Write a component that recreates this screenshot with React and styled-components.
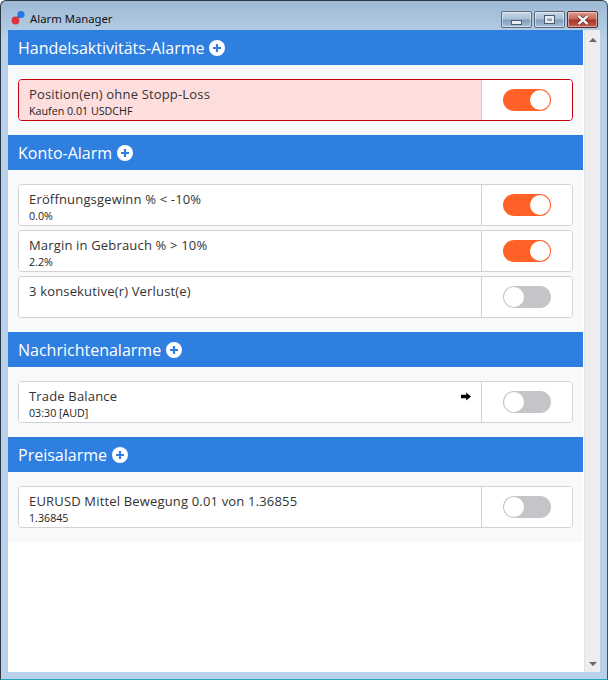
import styled, { createGlobalStyle } from 'styled-components'

const Global = createGlobalStyle`
  html, body { margin: 0; padding: 0; height: 100%; }
  body { font-family: "Open Sans", "Liberation Sans", sans-serif; background: #fff; }
`

function Toggle({ on }) {
  return (
    <ToggleTrack on={on ? 1 : 0}>
      <ToggleKnob on={on ? 1 : 0} />
    </ToggleTrack>
  )
}

function AlarmCard({ title, sub, on, alert, arrow }) {
  return (
    <Card alert={alert ? 1 : 0}>
      <CardText alert={alert ? 1 : 0}>
        <CardTitle>{title}</CardTitle>
        <CardSub>{sub}</CardSub>
        {arrow && (
          <ArrowIcon viewBox="0 0 10 9">
            <path d="M0 2.8h5.2V0.4L10 4.5 5.2 8.6V6.2H0z" fill="#000" />
          </ArrowIcon>
        )}
      </CardText>
      <CardSwitch>
        <Toggle on={on} />
      </CardSwitch>
    </Card>
  )
}

function Section({ title, children }) {
  return (
    <>
      <SectionHeader>
        <span>{title}</span>
        <PlusIcon viewBox="0 0 16 16">
          <circle cx="8" cy="8" r="8" fill="#fff" />
          <path d="M8 4v8M4 8h8" stroke="#2e7fe0" strokeWidth="2.2" />
        </PlusIcon>
      </SectionHeader>
      <SectionBody>{children}</SectionBody>
    </>
  )
}

export default function App() {
  return (
    <Window>
      <Global />
      <TitleBar>
        <AppLogo viewBox="0 0 16 16">
          <path d="M6 6.5l2.5-1.5 1 2-2 1.5z" fill="#3b5a9a" />
          <circle cx="10" cy="4.5" r="3.6" fill="#2277e6" />
          <circle cx="4.5" cy="10.5" r="3.9" fill="#d9333f" />
        </AppLogo>
        <TitleText>Alarm Manager</TitleText>
        <WindowButtons>
          <WinButton>
            <MinGlyph />
          </WinButton>
          <WinButton>
            <MaxGlyph />
          </WinButton>
          <CloseButton>
            <CloseGlyph viewBox="0 0 12 10">
              <path d="M1.5 1l9 8M10.5 1l-9 8" stroke="#5a2a28" strokeWidth="4" />
              <path d="M1.5 1l9 8M10.5 1l-9 8" stroke="#f4f1f0" strokeWidth="2.4" />
            </CloseGlyph>
          </CloseButton>
        </WindowButtons>
      </TitleBar>
      <ClientArea>
        <Content>
          <Sections>
            <Section title="Handelsaktivitäts-Alarme">
              <AlarmCard alert on title="Position(en) ohne Stopp-Loss" sub="Kaufen 0.01 USDCHF" />
            </Section>
            <Section title="Konto-Alarm">
              <AlarmCard on title="Eröffnungsgewinn % < -10%" sub="0.0%" />
              <AlarmCard on title="Margin in Gebrauch % > 10%" sub="2.2%" />
              <AlarmCard title="3 konsekutive(r) Verlust(e)" sub="" />
            </Section>
            <Section title="Nachrichtenalarme">
              <AlarmCard arrow title="Trade Balance" sub="03:30 [AUD]" />
            </Section>
            <Section title="Preisalarme">
              <AlarmCard title="EURUSD Mittel Bewegung 0.01 von 1.36855" sub="1.36845" />
            </Section>
          </Sections>
        </Content>
        <Scrollbar>
          <ScrollArrow />
          <ScrollArrow down />
        </Scrollbar>
      </ClientArea>
    </Window>
  )
}

const Window = styled.div`
  width: 608px;
  height: 680px;
  box-sizing: border-box;
  display: flex;
  flex-direction: column;
  border: 1px solid #2b3a44;
  border-bottom-color: #1fa7b5;
  border-right-color: #1c5f6b;
  border-radius: 6px 6px 0 0;
  background: linear-gradient(180deg, #9fb9d4 0, #b9d1ea 40px, #b9d1ea 100%);
  overflow: hidden;
`

const TitleBar = styled.div`
  height: 29px;
  flex: none;
  box-sizing: border-box;
  display: flex;
  align-items: center;
  padding: 5px 9px 0 10px;
`

const AppLogo = styled.svg`
  width: 16px;
  height: 16px;
`

const TitleText = styled.div`
  margin-left: 3px;
  font-family: "Noto Sans", "Open Sans", sans-serif;
  font-size: 11.3px;
  color: #111;
`

const WindowButtons = styled.div`
  margin-left: auto;
  display: flex;
  gap: 2px;
  align-self: flex-start;
  margin-top: 5px;
`

const WinButton = styled.div`
  width: 31px;
  height: 17px;
  box-sizing: border-box;
  border: 1px solid #5a6b80;
  border-radius: 2px;
  display: flex;
  align-items: center;
  justify-content: center;
  background: linear-gradient(180deg, #c8d8e8 0, #aac0d6 45%, #7f9cba 55%, #a9c2da 100%);
  box-shadow: inset 0 0 0 1px rgba(255, 255, 255, 0.45);
`

const CloseButton = styled(WinButton)`
  border-color: #5c2a2a;
  background: linear-gradient(180deg, #dc9a8e 0, #c9695c 45%, #a8352a 55%, #c2604f 100%);
`

const MinGlyph = styled.div`
  width: 9px;
  height: 3px;
  margin-top: 5px;
  background: #e9eef3;
  border: 1px solid #4d5c6c;
`

const MaxGlyph = styled.div`
  width: 5px;
  height: 3px;
  border: 2px solid #e9eef3;
  outline: 1px solid #4d5c6c;
`

const CloseGlyph = styled.svg`
  width: 12px;
  height: 10px;
`

const ClientArea = styled.div`
  flex: 1;
  display: flex;
  margin: 0 7px 7px 7px;
  background: #fff;
  min-height: 0;
`

const Content = styled.div`
  flex: 1;
  min-width: 0;
  background: #fff;
`

const Sections = styled.div`
  background: #f8f9fb;
`

const SectionHeader = styled.div`
  height: 35px;
  box-sizing: border-box;
  padding: 0 10px;
  background: #2e7fe0;
  color: #fff;
  display: flex;
  align-items: center;
  gap: 5px;
  font-size: 16px;
`

const PlusIcon = styled.svg`
  width: 16px;
  height: 16px;
  margin-top: 1px;
`

const SectionBody = styled.div`
  padding: 14px 10px;
  display: flex;
  flex-direction: column;
  gap: 4px;
`

const Card = styled.div`
  height: 42px;
  box-sizing: border-box;
  display: flex;
  border: 1px solid ${p => (p.alert ? '#c4000c' : '#d2d2d2')};
  border-radius: 4px;
  background: #fff;
  overflow: hidden;
`

const CardText = styled.div`
  flex: 1;
  min-width: 0;
  position: relative;
  padding: 6px 10px 0;
  background: ${p => (p.alert ? '#fedddd' : '#fff')};
  color: #333;
  border-right: 1px solid ${p => (p.alert ? '#e3c4c4' : '#d2d2d2')};
`

const CardTitle = styled.div`
  font-size: 13px;
  line-height: 17px;
  letter-spacing: 0.17px;
`

const CardSub = styled.div`
  font-size: 10.7px;
  line-height: 14px;
  margin-top: 1px;
  color: #222;
`

const ArrowIcon = styled.svg`
  position: absolute;
  right: 10px;
  top: 10px;
  width: 10px;
  height: 9px;
`

const CardSwitch = styled.div`
  width: 90px;
  flex: none;
  display: flex;
  align-items: center;
  justify-content: center;
  background: #fff;
`

const ToggleTrack = styled.div`
  width: 48px;
  height: 22px;
  box-sizing: border-box;
  border-radius: 11px;
  background: ${p => (p.on ? '#ff6127' : '#c4c4c9')};
  position: relative;
`

const ToggleKnob = styled.div`
  position: absolute;
  top: 1px;
  left: ${p => (p.on ? '27px' : '1px')};
  width: 20px;
  height: 20px;
  border-radius: 50%;
  background: #fff;
`

const Scrollbar = styled.div`
  width: 16px;
  flex: none;
  box-sizing: border-box;
  margin-left: 1px;
  background: #ededed;
  border-left: 1px solid #e2e2e2;
  display: flex;
  flex-direction: column;
  justify-content: space-between;
  align-items: center;
  padding: 8px 0 6px;
`

const ScrollArrow = styled.div`
  width: 0;
  height: 0;
  border-left: 4px solid transparent;
  border-right: 4px solid transparent;
  ${p => (p.down ? 'border-top: 4px solid #666;' : 'border-bottom: 4px solid #666;')}
`
